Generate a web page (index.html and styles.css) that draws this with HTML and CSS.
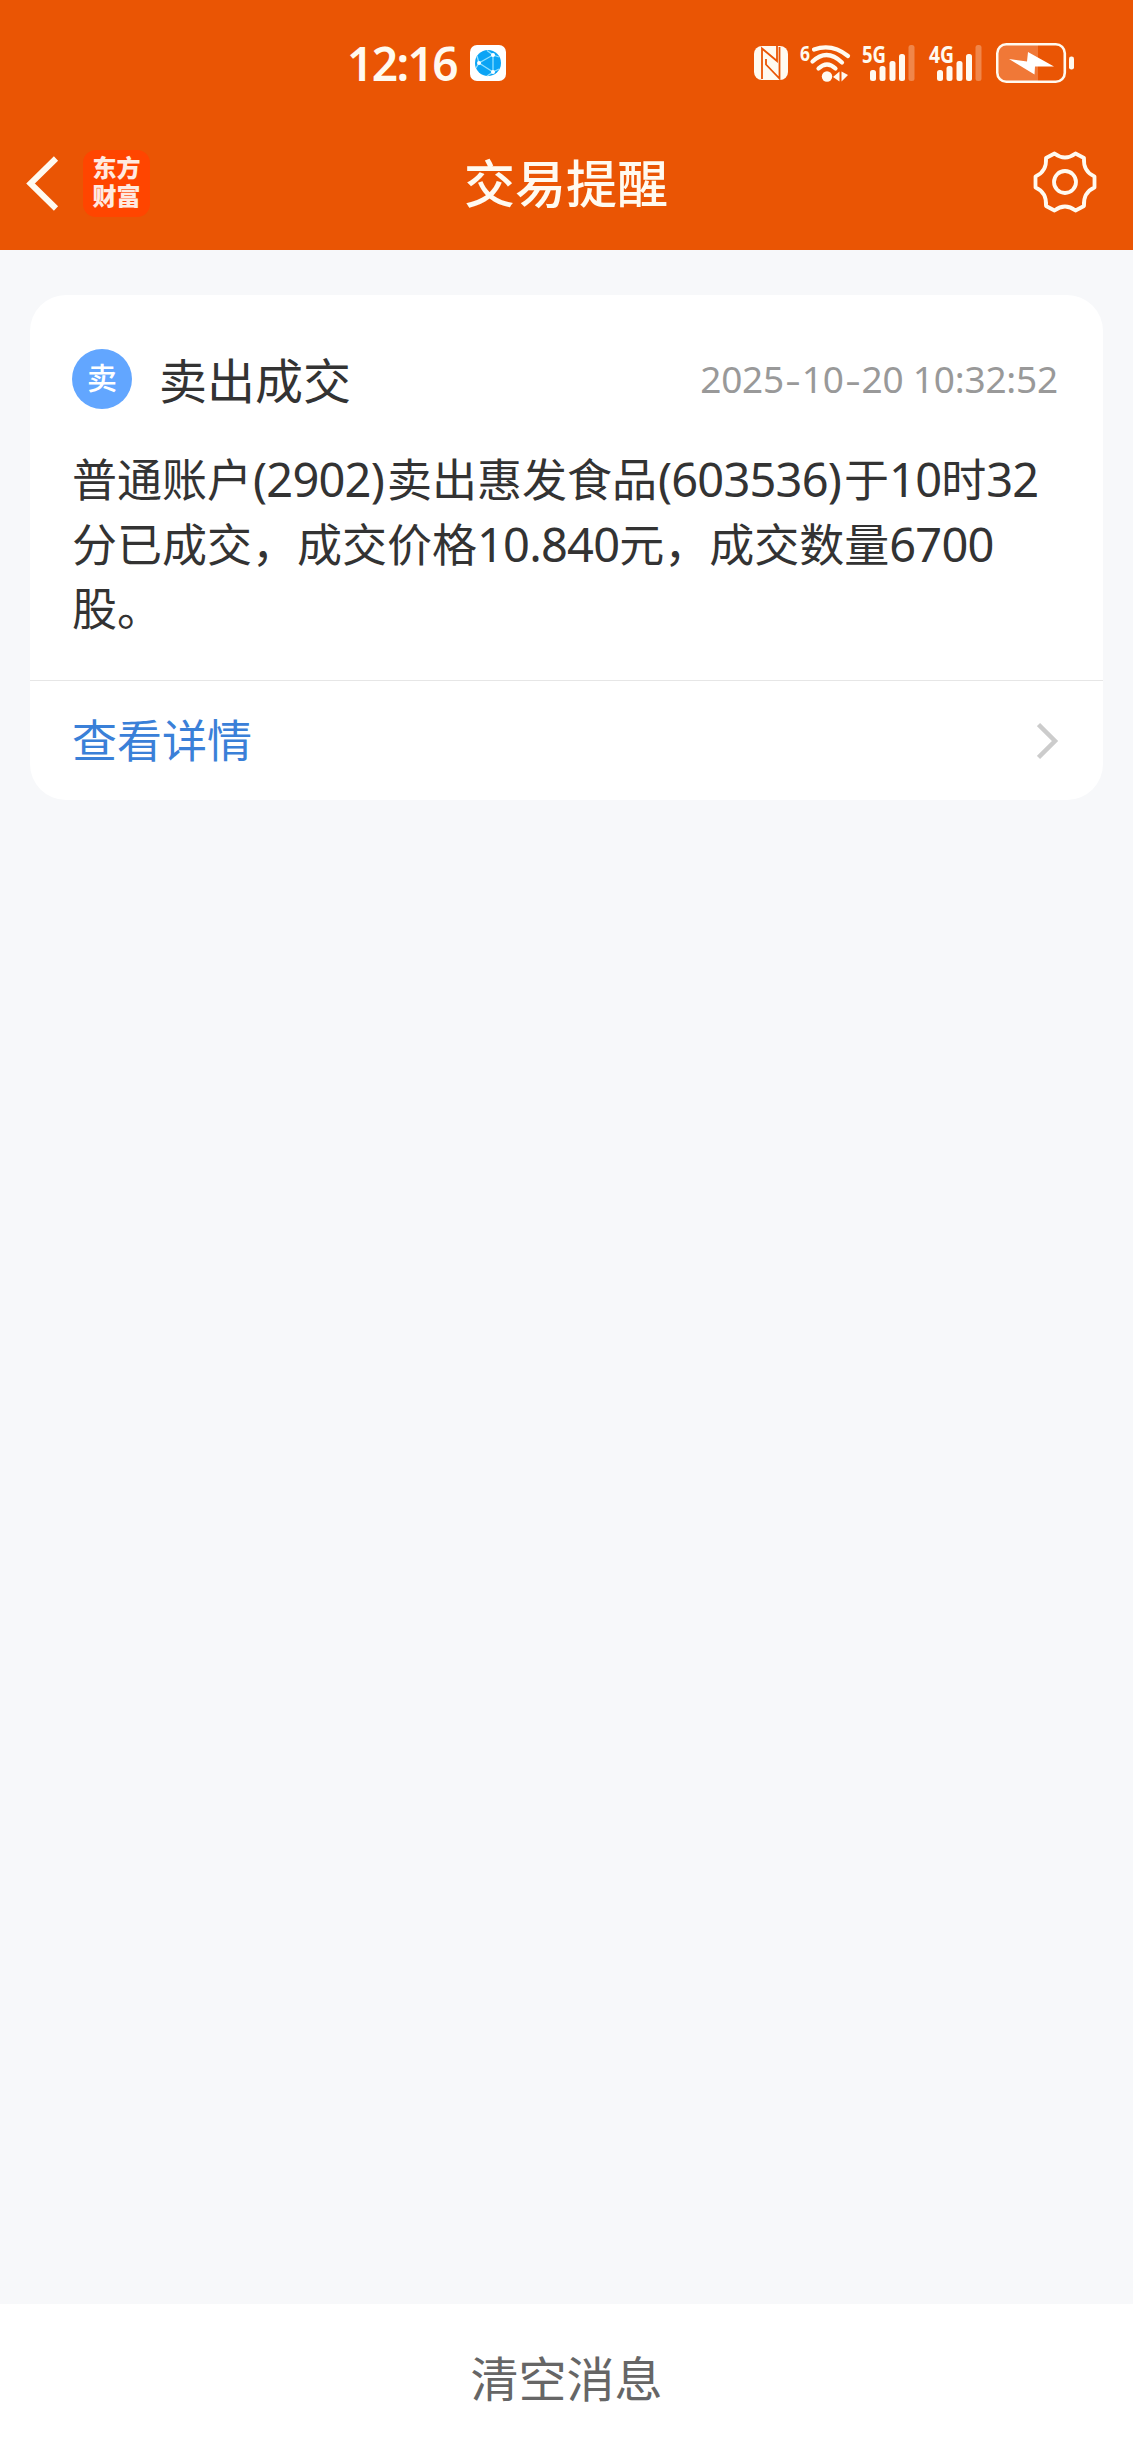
FILE: index.html
```
<!DOCTYPE html>
<html lang="zh-CN">
<head>
  <meta charset="UTF-8">
  <meta name="viewport" content="width=device-width, initial-scale=1.0">
  <title>交易提醒</title>
  <link rel="stylesheet" href="styles.css">
</head>
<body>
  <header class="header">
    <div class="status-bar">
      <div class="status-left">
        <span class="clock">12:16</span>
        <svg class="app-badge" width="36" height="36" viewBox="0 0 36 36">
          <rect width="36" height="36" rx="7" fill="#fff"/>
          <circle cx="18" cy="18" r="13" fill="#0ba4f5"/>
          <path d="M17 5.500 23 10 9 18 23 27 17 31M9 18 7 11M9 18 6 23M23 10V27M23 10 29 12M23 27 29 24" fill="none" stroke="#8fe0ff" stroke-width="1.300"/>
          <g fill="#fff"><circle cx="23" cy="10" r="2"/><circle cx="9" cy="18" r="2"/><circle cx="23" cy="27" r="2"/></g>
        </svg>
      </div>
      <!-- NFC, wifi, signal, battery -->
      <svg class="status-icons" width="326" height="64" viewBox="750 30 326 64">
        <rect x="754" y="45" width="34" height="34" rx="8" fill="#fffaf0"/>
        <g fill="none" stroke="#ea5504" stroke-width="1.800">
          <path d="M762 78V47.500L777 60V45"/>
          <path d="M779.500 46V77.500L766 63.500V58"/>
        </g>
        <text class="net net-wifi" x="800" y="60" textLength="10" lengthAdjust="spacingAndGlyphs">6</text>
        <g fill="none" stroke="#fffaf0" stroke-width="4.200" stroke-linecap="round">
          <path d="M814 48.500Q832 42 848 55"/>
          <path d="M812.500 60.500Q827 47 842 61.500"/>
          <path d="M818.500 67.500Q827 59.500 835.500 67.500"/>
        </g>
        <circle cx="827" cy="75.500" r="5.200" fill="#fffaf0"/>
        <path d="M833 76 839.500 70.500V80.500ZM848 74 841.500 70.500V80.500Z" fill="#fffaf0"/>
        <text class="net" x="862" y="62" textLength="24" lengthAdjust="spacingAndGlyphs">5G</text>
        <g fill="#fffaf0">
          <rect x="870" y="69" width="6" height="11" rx="2.500"/>
          <rect x="879.500" y="65" width="6" height="15" rx="2.500"/>
          <rect x="889.500" y="60" width="6" height="20" rx="2.500"/>
          <rect x="899" y="53" width="6" height="27" rx="2.500"/>
          <rect x="908.500" y="44" width="6" height="36" rx="2.500" opacity=".3"/>
        </g>
        <text class="net" x="929" y="62" textLength="25" lengthAdjust="spacingAndGlyphs">4G</text>
        <g fill="#fffaf0">
          <rect x="937" y="69" width="6" height="11" rx="2.500"/>
          <rect x="946.500" y="65" width="6" height="15" rx="2.500"/>
          <rect x="956.500" y="60" width="6" height="20" rx="2.500"/>
          <rect x="966" y="53" width="6" height="27" rx="2.500"/>
          <rect x="975.500" y="44" width="6" height="36" rx="2.500" opacity=".3"/>
        </g>
        <path d="M1038 44H1007Q999 44 999 52V72Q999 80 1007 80H1038Z" fill="#f07837"/>
        <rect x="997.300" y="43.300" width="67.500" height="37.400" rx="9" fill="none" stroke="#fffaf0" stroke-width="2.600"/>
        <rect x="1069" y="55.500" width="5" height="13" rx="2.300" fill="#fffaf0"/>
        <path d="M1009 58 1027 60.500 1028 51 1054 65.500 1035 65.500 1034.500 73.500Z" fill="#fff"/>
      </svg>
    </div>
    <nav class="nav-bar">
      <div class="nav-left">
        <svg class="back" width="34" height="58" viewBox="0 0 34 58">
          <path d="M30 4.500 4.500 29.500 30 54.500" fill="none" stroke="#fffaf0" stroke-width="6"/>
        </svg>
        <div class="logo"><span>东方</span><span>财富</span></div>
      </div>
      <h1>交易提醒</h1>
      <svg class="settings" width="66" height="66" viewBox="-33 -33 66 66">
        <g fill="none" stroke="#fffaf0" stroke-width="3.800">
          <path d="M-10.500-28.500Q0-20.500 10.500-28.500L19-24Q18-10.500 29.500-5.500V5.500Q18 10.500 19 24L10.500 28.500Q0 20.500-10.500 28.500L-19 24Q-18 10.500-29.500 5.500V-5.500Q-18-10.500-19-24Z" stroke-linejoin="round"/>
          <circle r="11"/>
        </g>
      </svg>
    </nav>
  </header>

  <main class="content">
    <section class="card">
      <div class="card-body">
        <div class="card-head">
          <span class="badge">卖</span>
          <h2>卖出成交</h2>
          <time class="date">2025<i>-</i>10<i>-</i>20 10:32:52</time>
        </div>
        <p class="message">普通账户<span class="num code">(2902)</span>卖出惠发食品<span class="num code">(603536)</span>于<span class="num">10</span>时<span class="num">32</span><br>分已成交，成交价格<span class="num">10.840</span>元，成交数量<span class="num">6700</span><br>股。</p>
      </div>
      <div class="card-link">
        <span>查看详情</span>
        <svg width="24" height="38" viewBox="0 0 24 38">
          <path d="M1.500 2.500 18 19 1.500 35.500" fill="none" stroke="#ccc" stroke-width="4.500"/>
        </svg>
      </div>
    </section>
  </main>

  <footer class="footer">清空消息</footer>
</body>
</html>
```
FILE: styles.css
```
* { box-sizing: border-box; }
body {
  margin: 0;
  height: 2453px;
  display: flex; flex-direction: column;
  background: #f7f8fa;
  color: #333;
  font-family: "Noto Sans", "Noto Sans CJK SC", sans-serif;
}
h1, h2, p { margin: 0; font-weight: normal; }
svg { display: block; flex: none; }
.header {
  height: 250px;
  background: #ea5504;
  color: #fffaf0;
}
.status-bar {
  height: 126px;
  padding: 0 57px 0 347px;
  display: flex; justify-content: space-between; align-items: center;
}
.status-left { display: flex; align-items: center; gap: 11px; }
.clock {
  width: 112px;
  font-size: 46px; font-weight: 600; line-height: 60px;
  letter-spacing: -1.6px;
  white-space: nowrap;
}
.net { font: 700 23px "Noto Sans", sans-serif; fill: #fffaf0; }
.net-wifi { font-size: 22px; }
.nav-bar {
  height: 114px;
  padding: 0 35px 0 26px;
  display: grid; grid-template-columns: 1fr auto 1fr; align-items: center;
}
.nav-left { display: flex; align-items: center; gap: 23px; }
.logo {
  width: 67px; height: 67px;
  padding-top: 3px;
  border-radius: 13px;
  background: #ff4500;
  color: #ffeae0;
  display: flex; flex-direction: column; align-items: center;
  font: 900 24px/28px "Noto Sans CJK SC", sans-serif;
}
.nav-bar h1 { padding-left: 8px; font-size: 51px; line-height: 72px; font-weight: 500; }
.settings { justify-self: end; margin-bottom: 2px; }
.content { flex: 1; padding: 45px 30px; }
.card {
  height: 505px;
  border-radius: 36px;
  background: #fff;
}
.card-body { height: 385px; padding: 48px 42px 0; }
.card-head { height: 72px; display: flex; align-items: center; }
.badge {
  width: 60px; height: 60px;
  border-radius: 50%;
  background: #62a6ff;
  color: #fff;
  font-size: 30px; line-height: 58px; font-weight: 500;
  text-align: center;
}
.card-head h2 { margin-left: 27px; padding-top: 4px; font-size: 48px; line-height: 72px; }
.date {
  margin-left: auto; margin-right: 3px;
  color: #999;
  font-size: 37px; line-height: 50px;
  letter-spacing: -0.2px;
}
.date i { display: inline-block; transform: scaleX(1.3); padding: 0 3px; font-style: normal; }
.message {
  margin-top: 33px;
  font-size: 45px; line-height: 64.5px;
  white-space: nowrap;
}
.num { font-size: 47px; line-height: 1; letter-spacing: -0.8px; }
.code { padding: 0 3px 0 1px; }
.card-link {
  height: 120px;
  padding: 0 42px;
  border-top: 1px solid #e6e6e6;
  display: flex; justify-content: space-between; align-items: center;
  color: #3a80d8;
  font-size: 45px; line-height: 60px;
}
.footer {
  height: 149px;
  background: #fff;
  color: #666;
  font-size: 48px; line-height: 149px;
  text-align: center;
}
```
